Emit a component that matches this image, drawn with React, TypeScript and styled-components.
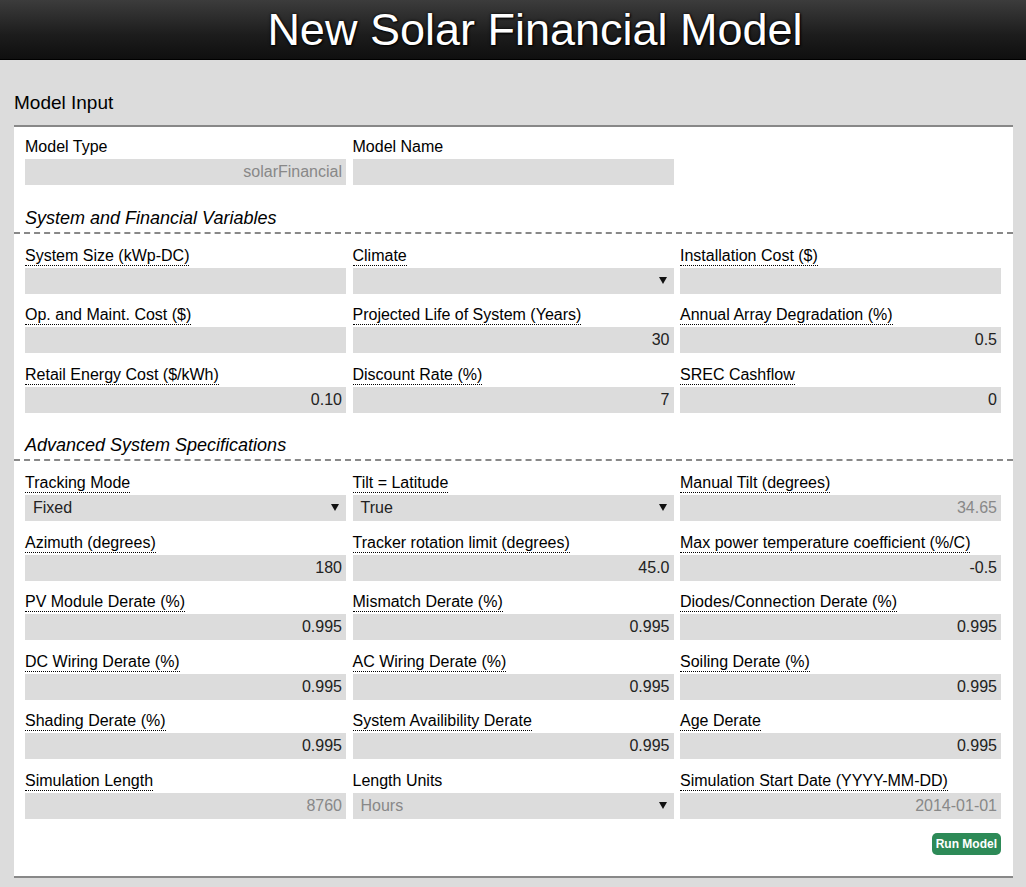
import React from "react";
import styled, { createGlobalStyle } from "styled-components";

const Global = createGlobalStyle`
  html, body { margin: 0; padding: 0; }
  body {
    background: #dcdcdc;
    font-family: "Liberation Sans", Arial, sans-serif;
    color: #000;
  }
`;

const Header = styled.header`
  height: 59px;
  border-bottom: 1px solid #000;
  background: linear-gradient(to bottom, #3c3c3c 0%, #1c1c1c 60%, #0f0f0f 100%);
  display: flex;
  align-items: center;
  justify-content: center;
`;

const Title = styled.h1`
  margin: 0;
  padding-left: 44px;
  font-family: "Liberation Sans", Arial, sans-serif;
  font-weight: normal;
  font-size: 45px;
  line-height: 52px;
  color: #fff;
  text-shadow: 0 0 3px #000, 1px 1px 2px #000;
`;

const Main = styled.main`
  padding: 0 13px 0 14px;
`;

const PageHeading = styled.h2`
  margin: 0;
  padding-top: 31px;
  height: 34px;
  font-size: 19px;
  line-height: 24px;
  font-weight: normal;
`;

const Panel = styled.section`
  background: #fff;
  border-top: 2px solid #888;
  border-bottom: 2px solid #888;
  padding: 11px 0 21px 0;
`;

const Grid = styled.div`
  display: grid;
  grid-template-columns: repeat(3, 321px);
  column-gap: 6.5px;
  row-gap: 12.5px;
  padding-left: 11px;
`;

const SectionTitle = styled.h3`
  margin: 21.5px 0 13px 0;
  padding: 0 0 3px 11px;
  border-bottom: 2px dashed #888;
  font-size: 18px;
  line-height: 22px;
  font-style: italic;
  font-weight: normal;
`;

const Field = styled.div`
  display: flex;
  flex-direction: column;
  align-items: flex-start;
`;

const Label = styled.span<{ $plain?: boolean }>`
  font-size: 16px;
  line-height: 17px;
  height: 18px;
  border-bottom: ${(p) => (p.$plain ? "1px solid transparent" : "1px dotted #000")};
  margin-bottom: 2px;
`;

const Box = styled.div<{ $muted?: boolean; $select?: boolean }>`
  width: 321px;
  height: 26px;
  box-sizing: border-box;
  background: #dcdcdc;
  font-size: 16px;
  line-height: 26px;
  color: ${(p) => (p.$muted ? "#888" : "#222")};
  text-align: ${(p) => (p.$select ? "left" : "right")};
  padding: ${(p) => (p.$select ? "0 0 0 8px" : "0 4px 0 0")};
  position: relative;
  white-space: nowrap;
`;

const Arrow = styled.span`
  position: absolute;
  right: 7px;
  top: 9px;
  width: 0;
  height: 0;
  border-left: 4px solid transparent;
  border-right: 4px solid transparent;
  border-top: 7px solid #111;
`;

const Actions = styled.div`
  display: flex;
  justify-content: flex-end;
  padding: 14px 12px 0 0;
`;

const RunButton = styled.button`
  background: #2d8a57;
  color: #fff;
  border: none;
  border-radius: 5px;
  font-family: "Liberation Sans", Arial, sans-serif;
  font-size: 12px;
  font-weight: bold;
  height: 22px;
  padding: 0 4px;
  cursor: pointer;
`;

type F = {
  label: string;
  value?: string;
  muted?: boolean;
  select?: boolean;
  plain?: boolean;
};

const FieldView = ({ f }: { f: F }) => (
  <Field>
    <Label $plain={f.plain}>{f.label}</Label>
    <Box $muted={f.muted} $select={f.select}>
      {f.value}
      {f.select && <Arrow />}
    </Box>
  </Field>
);

const top: F[] = [
  { label: "Model Type", value: "solarFinancial", muted: true, plain: true },
  { label: "Model Name", value: "", plain: true },
];

const sys: F[] = [
  { label: "System Size (kWp-DC)", value: "" },
  { label: "Climate", value: "", select: true },
  { label: "Installation Cost ($)", value: "" },
  { label: "Op. and Maint. Cost ($)", value: "" },
  { label: "Projected Life of System (Years)", value: "30" },
  { label: "Annual Array Degradation (%)", value: "0.5" },
  { label: "Retail Energy Cost ($/kWh)", value: "0.10" },
  { label: "Discount Rate (%)", value: "7" },
  { label: "SREC Cashflow", value: "0" },
];

const adv: F[] = [
  { label: "Tracking Mode", value: "Fixed", select: true },
  { label: "Tilt = Latitude", value: "True", select: true },
  { label: "Manual Tilt (degrees)", value: "34.65", muted: true },
  { label: "Azimuth (degrees)", value: "180" },
  { label: "Tracker rotation limit (degrees)", value: "45.0" },
  { label: "Max power temperature coefficient (%/C)", value: "-0.5" },
  { label: "PV Module Derate (%)", value: "0.995" },
  { label: "Mismatch Derate (%)", value: "0.995" },
  { label: "Diodes/Connection Derate (%)", value: "0.995" },
  { label: "DC Wiring Derate (%)", value: "0.995" },
  { label: "AC Wiring Derate (%)", value: "0.995" },
  { label: "Soiling Derate (%)", value: "0.995" },
  { label: "Shading Derate (%)", value: "0.995" },
  { label: "System Availibility Derate", value: "0.995" },
  { label: "Age Derate", value: "0.995" },
  { label: "Simulation Length", value: "8760", muted: true },
  { label: "Length Units", value: "Hours", select: true, muted: true, plain: true },
  { label: "Simulation Start Date (YYYY-MM-DD)", value: "2014-01-01", muted: true },
];

export default function App() {
  return (
    <>
      <Global />
      <Header>
        <Title>New Solar Financial Model</Title>
      </Header>
      <Main>
        <PageHeading>Model Input</PageHeading>
        <Panel>
          <Grid>
            {top.map((f) => (
              <FieldView key={f.label} f={f} />
            ))}
          </Grid>
          <SectionTitle>System and Financial Variables</SectionTitle>
          <Grid>
            {sys.map((f) => (
              <FieldView key={f.label} f={f} />
            ))}
          </Grid>
          <SectionTitle>Advanced System Specifications</SectionTitle>
          <Grid>
            {adv.map((f) => (
              <FieldView key={f.label} f={f} />
            ))}
          </Grid>
          <Actions>
            <RunButton>Run Model</RunButton>
          </Actions>
        </Panel>
      </Main>
    </>
  );
}
